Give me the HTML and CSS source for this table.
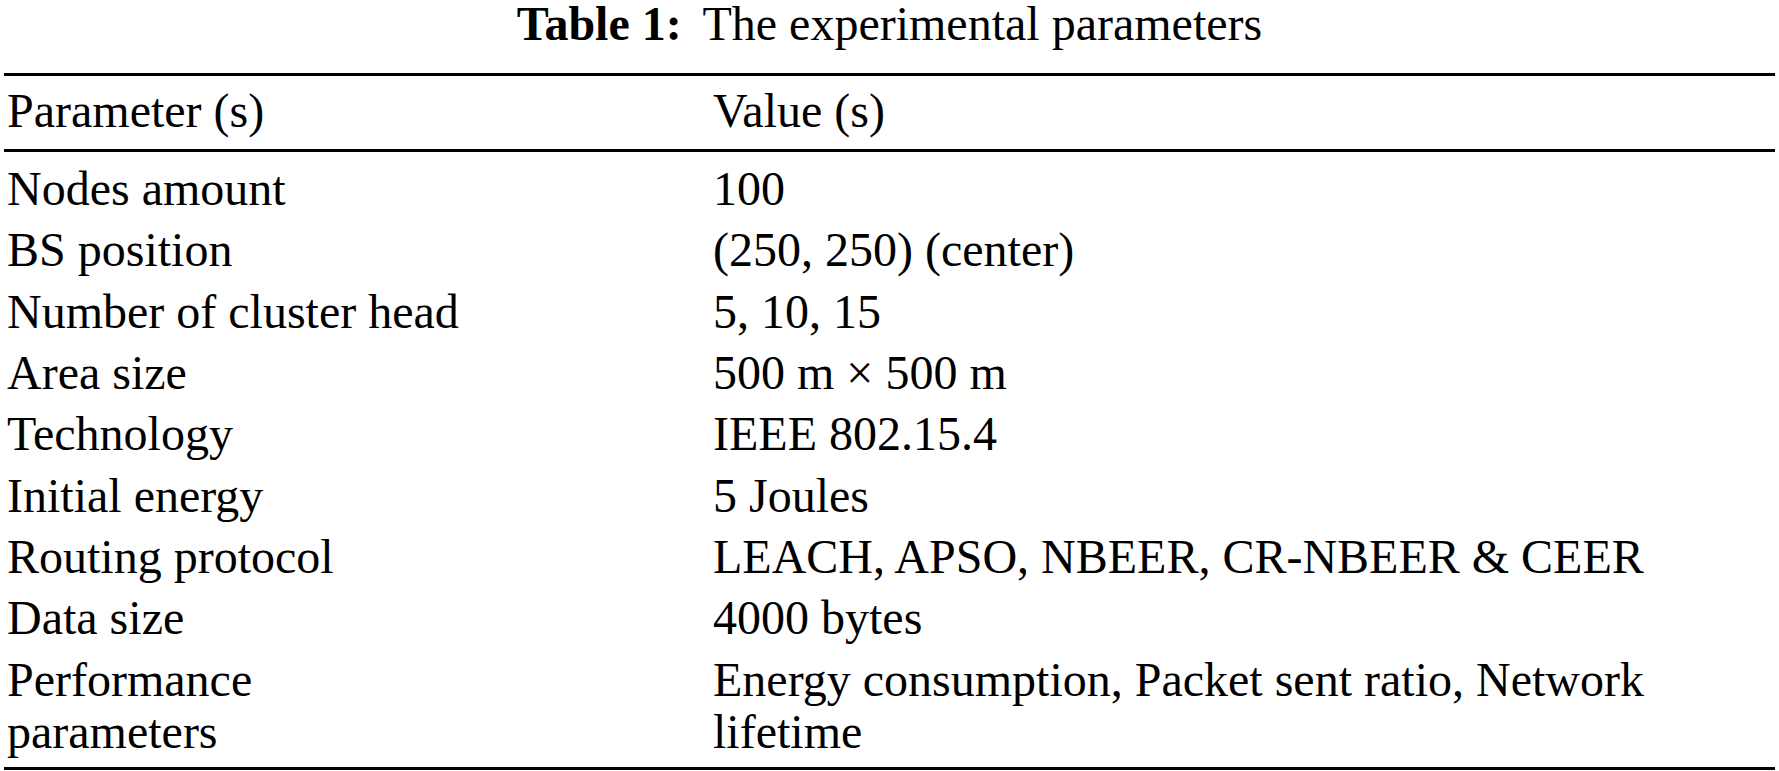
FILE: index.html
```html
<!DOCTYPE html>
<html lang="en">
<head>
<meta charset="utf-8">
<title>Table 1: The experimental parameters</title>
<link rel="stylesheet" href="styles.css">
</head>
<body>
<div class="caption"><span class="label">Table 1:</span> The experimental parameters</div>
<table class="params">
  <thead>
    <tr><th class="c1">Parameter (s)</th><th class="c2">Value (s)</th></tr>
  </thead>
  <tbody>
    <tr class="first"><td class="c1">Nodes amount</td><td class="c2">100</td></tr>
    <tr><td class="c1">BS position</td><td class="c2">(250, 250) (center)</td></tr>
    <tr><td class="c1">Number of cluster head</td><td class="c2">5, 10, 15</td></tr>
    <tr><td class="c1">Area size</td><td class="c2">500 m × 500 m</td></tr>
    <tr><td class="c1">Technology</td><td class="c2">IEEE 802.15.4</td></tr>
    <tr><td class="c1">Initial energy</td><td class="c2">5 Joules</td></tr>
    <tr><td class="c1">Routing protocol</td><td class="c2">LEACH, APSO, NBEER, CR-NBEER &amp; CEER</td></tr>
    <tr><td class="c1">Data size</td><td class="c2">4000 bytes</td></tr>
    <tr class="last"><td class="c1">Performance parameters</td><td class="c2">Energy consumption, Packet sent ratio, Network lifetime</td></tr>
  </tbody>
</table>
</body>
</html>
```
FILE: styles.css
```css
html, body {
  margin: 0;
  padding: 0;
  background: #ffffff;
  color: #000000;
}

body {
  font-family: "Liberation Serif", "Times New Roman", serif;
  font-size: 48px;
}

.caption {
  text-align: center;
  line-height: 48px;
  height: 48px;
  margin: 0 0 25px 0;
}

.caption .label {
  font-weight: bold;
  margin-right: 0.2em;
}

.params {
  border-collapse: separate;
  border-spacing: 0;
  table-layout: fixed;
  width: calc(100% - 8px);
  margin: 0 4px;
  line-height: 52px;
}

.params th,
.params td {
  text-align: left;
  vertical-align: top;
  font-weight: normal;
  padding: 4.7px 3px;
}

.params th {
  border-top: 3px solid #000;
  border-bottom: 3px solid #000;
  padding-top: 8.5px;
  padding-bottom: 12px;
}

.params .c1 {
  width: 460px;
  padding-right: 243px;
}

.params tr.first td {
  padding-top: 11.3px;
}

.params tr.last td {
  padding-bottom: 9px;
  border-bottom: 3px solid #000;
}
```
